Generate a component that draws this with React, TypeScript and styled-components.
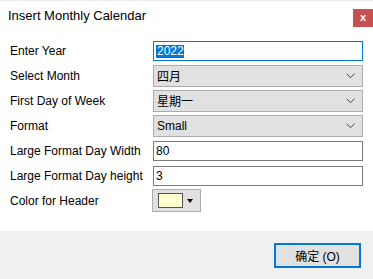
import React from 'react';
import styled, { createGlobalStyle } from 'styled-components';

const GlobalStyle = createGlobalStyle`
  html, body {
    margin: 0;
    padding: 0;
    background: #ffffff;
  }
  body {
    font-family: "Liberation Sans", "Noto Sans CJK SC", sans-serif;
    color: #000000;
  }
`;

const CJK = `"Liberation Sans", "Noto Sans CJK SC", sans-serif`;

interface Field {
  label: string;
  kind: 'text' | 'combo' | 'color';
  value?: string;
  focused?: boolean;
}

const fields: Field[] = [
  { label: 'Enter Year', kind: 'text', value: '2022', focused: true },
  { label: 'Select Month', kind: 'combo', value: '四月' },
  { label: 'First Day of Week', kind: 'combo', value: '星期一' },
  { label: 'Format', kind: 'combo', value: 'Small' },
  { label: 'Large Format Day Width', kind: 'text', value: '80' },
  { label: 'Large Format Day height', kind: 'text', value: '3' },
  { label: 'Color for Header', kind: 'color' }
];

const Chevron = () => (
  <svg width="9" height="6" viewBox="0 0 9 6">
    <path d="M0.5 0.8 L4.5 4.6 L8.5 0.8" fill="none" stroke="#444" strokeWidth="1" />
  </svg>
);

export default function App() {
  return (
    <Dialog>
      <GlobalStyle />
      <TitleBar>
        <Title>Insert Monthly Calendar</Title>
        <CloseButton>x</CloseButton>
      </TitleBar>

      <Form>
        {fields.map((field) => (
          <Row key={field.label}>
            <Label>{field.label}</Label>
            {field.kind === 'text' && (
              <TextBox focused={field.focused}>
                {field.focused ? <Selected>{field.value}</Selected> : field.value}
              </TextBox>
            )}
            {field.kind === 'combo' && (
              <ComboBox>
                <span>{field.value}</span>
                <Chevron />
              </ComboBox>
            )}
            {field.kind === 'color' && (
              <ColorButton>
                <Swatch color="#ffffd0" />
                <DropArrow />
              </ColorButton>
            )}
          </Row>
        ))}
      </Form>

      <Footer>
        <OkButton>确定 (O)</OkButton>
      </Footer>
    </Dialog>
  );
}

const Dialog = styled.div`
  width: 373px;
  height: 279px;
  display: flex;
  flex-direction: column;
  background: #ffffff;
  border-top: 1px solid #ececec;
  box-sizing: border-box;
  overflow: hidden;
`;

const TitleBar = styled.div`
  height: 36px;
  display: flex;
  justify-content: space-between;
  align-items: flex-start;
  padding-left: 8px;
  flex-shrink: 0;
`;

const Title = styled.div`
  margin-top: 6px;
  font-size: 13px;
  line-height: 17px;
  color: #000;
`;

const CloseButton = styled.div`
  margin-top: 8px;
  width: 20px;
  height: 18px;
  background: #c75050;
  color: #ffffff;
  font-weight: bold;
  font-size: 11px;
  line-height: 17px;
  text-align: center;
`;

const Form = styled.div`
  flex: 1;
  display: flex;
  flex-direction: column;
  padding: 1px 0 0 10px;
`;

const Row = styled.div`
  height: 25px;
  display: grid;
  grid-template-columns: 143px 210px;
  align-items: center;
`;

const Label = styled.div`
  font-size: 12px;
  white-space: nowrap;
`;

const TextBox = styled.div<{ focused?: boolean }>`
  height: 20px;
  box-sizing: border-box;
  border: 1px solid ${(p) => (p.focused ? '#0078d7' : '#7a7a7a')};
  background: #ffffff;
  font-size: 12px;
  line-height: 18px;
  padding-left: 2px;
`;

const Selected = styled.span`
  background: #0078d7;
  color: #ffffff;
  display: inline-block;
  line-height: 13px;
  padding: 0 0 0 1px;
`;

const ComboBox = styled.div`
  height: 22px;
  box-sizing: border-box;
  border: 1px solid #adadad;
  background: #e1e1e1;
  font-family: ${CJK};
  font-size: 12px;
  display: flex;
  align-items: center;
  justify-content: space-between;
  padding: 0 7px 0 3px;
`;

const ColorButton = styled.div`
  width: 49px;
  height: 23px;
  box-sizing: border-box;
  margin-left: -1px;
  border: 1px solid #adadad;
  background: #e1e1e1;
  display: flex;
  align-items: center;
  padding-left: 5px;
  gap: 4px;
`;

const Swatch = styled.div<{ color: string }>`
  width: 25px;
  height: 15px;
  box-sizing: border-box;
  border: 1px solid #555555;
  background: ${(p) => p.color};
`;

const DropArrow = styled.div`
  width: 0;
  height: 0;
  border-left: 3.5px solid transparent;
  border-right: 3.5px solid transparent;
  border-top: 4px solid #000000;
`;

const Footer = styled.div`
  height: 48px;
  flex-shrink: 0;
  background: #f0f0f0;
  display: flex;
  justify-content: flex-end;
  align-items: flex-start;
  padding: 12px 12px 0 0;
  box-sizing: border-box;
`;

const OkButton = styled.div`
  width: 87px;
  height: 25px;
  box-sizing: border-box;
  border: 2px solid #0078d7;
  background: #e1e1e1;
  font-family: ${CJK};
  font-size: 12px;
  display: flex;
  align-items: center;
  justify-content: center;
`;
